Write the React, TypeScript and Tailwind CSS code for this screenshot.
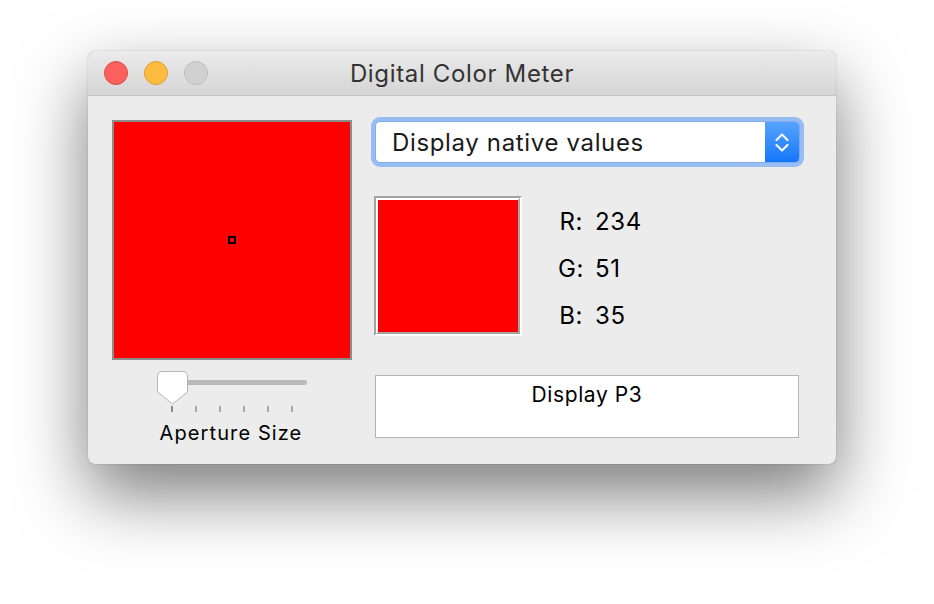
import React from "react";

const font = { fontFamily: "Inter, 'Noto Sans', 'Liberation Sans', sans-serif" };

function Knob() {
  return (
    <svg width="32" height="35" viewBox="0 0 32 35" className="absolute left-0 top-0">
      <path
        d="M5 0.5 H26 A4.5 4.5 0 0 1 30.5 5 V21 L15.5 33 L0.5 21 V5 A4.5 4.5 0 0 1 5 0.5 Z"
        fill="#ffffff"
        stroke="#b5b5b5"
        strokeWidth="1"
      />
    </svg>
  );
}

export default function App() {
  const ticks = [0, 1, 2, 3, 4, 5];
  return (
    <div className="w-[934px] h-[604px] bg-white pl-[88px] pt-[51px]" style={font}>
      <div className="w-[748px] h-[413px] rounded-[7px] bg-[#ececec] overflow-hidden shadow-[0_30px_70px_rgba(0,0,0,0.52),0_0_1px_rgba(0,0,0,0.5)] flex flex-col">
        {/* Title bar */}
        <div className="h-[45px] shrink-0 bg-gradient-to-b from-[#ebebeb] to-[#d5d5d5] border-b border-[#c4c4c4] flex items-center relative">
          <div className="flex items-center gap-4 pl-4">
            <div className="w-6 h-6 rounded-full bg-[#fc605c] border border-[#de4a45]" />
            <div className="w-6 h-6 rounded-full bg-[#fdbc40] border border-[#de9f33]" />
            <div className="w-6 h-6 rounded-full bg-[#d1d1d1] border border-[#bdbdbd]" />
          </div>
          <div className="absolute inset-0 flex items-center justify-center pt-[1px] text-[24px] text-[#333333] tracking-[0.65px]">
            Digital Color Meter
          </div>
        </div>

        {/* Content */}
        <div className="flex pl-6 pt-6">
          {/* Left column */}
          <div className="flex flex-col items-center w-[240px]">
            <div className="w-[240px] h-[240px] border-2 border-[#8d8d8d] bg-[#ff0000] flex items-center justify-center">
              <div className="w-2 h-2 border-2 border-black" />
            </div>
            <div className="relative w-[150px] h-[55px] mt-[11px] self-start ml-[45px]">
              <div className="absolute left-[3px] right-0 top-[9px] h-[5px] rounded-full bg-[#b9b9b9]" />
              <Knob />
              <div className="absolute left-[14px] top-[35px] flex gap-[22px]">
                {ticks.map((t) => (
                  <div
                    key={t}
                    className={t === 0 ? "w-[2px] h-[6px] bg-[#8a8a8a]" : "w-[2px] h-[6px] bg-[#a9a9a9]"}
                  />
                ))}
              </div>
            </div>
            <div className="text-[20px] leading-none text-black tracking-[1.1px] -mt-[3px] -ml-[2px]">Aperture Size</div>
          </div>

          {/* Right column */}
          <div className="ml-[19px] -mt-[3px] w-[433px] flex flex-col">
            <div className="h-[50px] rounded-[9px] bg-[#97bdf2] p-[4px]">
              <div className="h-full rounded-[5px] bg-white flex items-stretch border border-[#7faaf0]">
                <div className="flex-1 flex items-center pl-4 pt-[1px] text-[24px] tracking-[0.65px] text-[#1a1a1a]">Display native values</div>
                <div className="w-[34px] rounded-r-[4px] bg-gradient-to-b from-[#55a3fd] to-[#1176fb] flex flex-col items-center justify-center gap-[3px]">
                  <svg width="14" height="8" viewBox="0 0 14 8">
                    <path d="M1.5 7 L7 1.5 L12.5 7" fill="none" stroke="#ffffff" strokeWidth="2" strokeLinecap="round" strokeLinejoin="round" />
                  </svg>
                  <svg width="14" height="8" viewBox="0 0 14 8">
                    <path d="M1.5 1 L7 6.5 L12.5 1" fill="none" stroke="#ffffff" strokeWidth="2" strokeLinecap="round" strokeLinejoin="round" />
                  </svg>
                </div>
              </div>
            </div>

            <div className="flex mt-[29px] ml-[3px]">
              <div className="w-[148px] h-[140px] border-2 border-t-[#a3a3a3] border-l-[#a3a3a3] border-r-white border-b-white">
                <div className="w-full h-full border-2 border-t-white border-l-white border-r-[#a3a3a3] border-b-[#a3a3a3] bg-[#ff0000]" />
              </div>
              <div className="ml-[36px] mt-[13px] flex flex-col gap-[21px] text-[24px] leading-[26px] tracking-[0.6px] text-black">
                <div className="flex"><span className="w-[25px] text-right">R:</span><span className="ml-[12px]">234</span></div>
                <div className="flex"><span className="w-[25px] text-right">G:</span><span className="ml-[12px]">51</span></div>
                <div className="flex"><span className="w-[25px] text-right">B:</span><span className="ml-[12px]">35</span></div>
              </div>
            </div>

            <div className="mt-[39px] ml-[4px] w-[424px] h-[63px] bg-white border border-[#b3b3b3] flex justify-center pt-[7px] text-[21px] leading-[24px] tracking-[0.6px] text-black">
              Display P3
            </div>
          </div>
        </div>
      </div>
    </div>
  );
}
